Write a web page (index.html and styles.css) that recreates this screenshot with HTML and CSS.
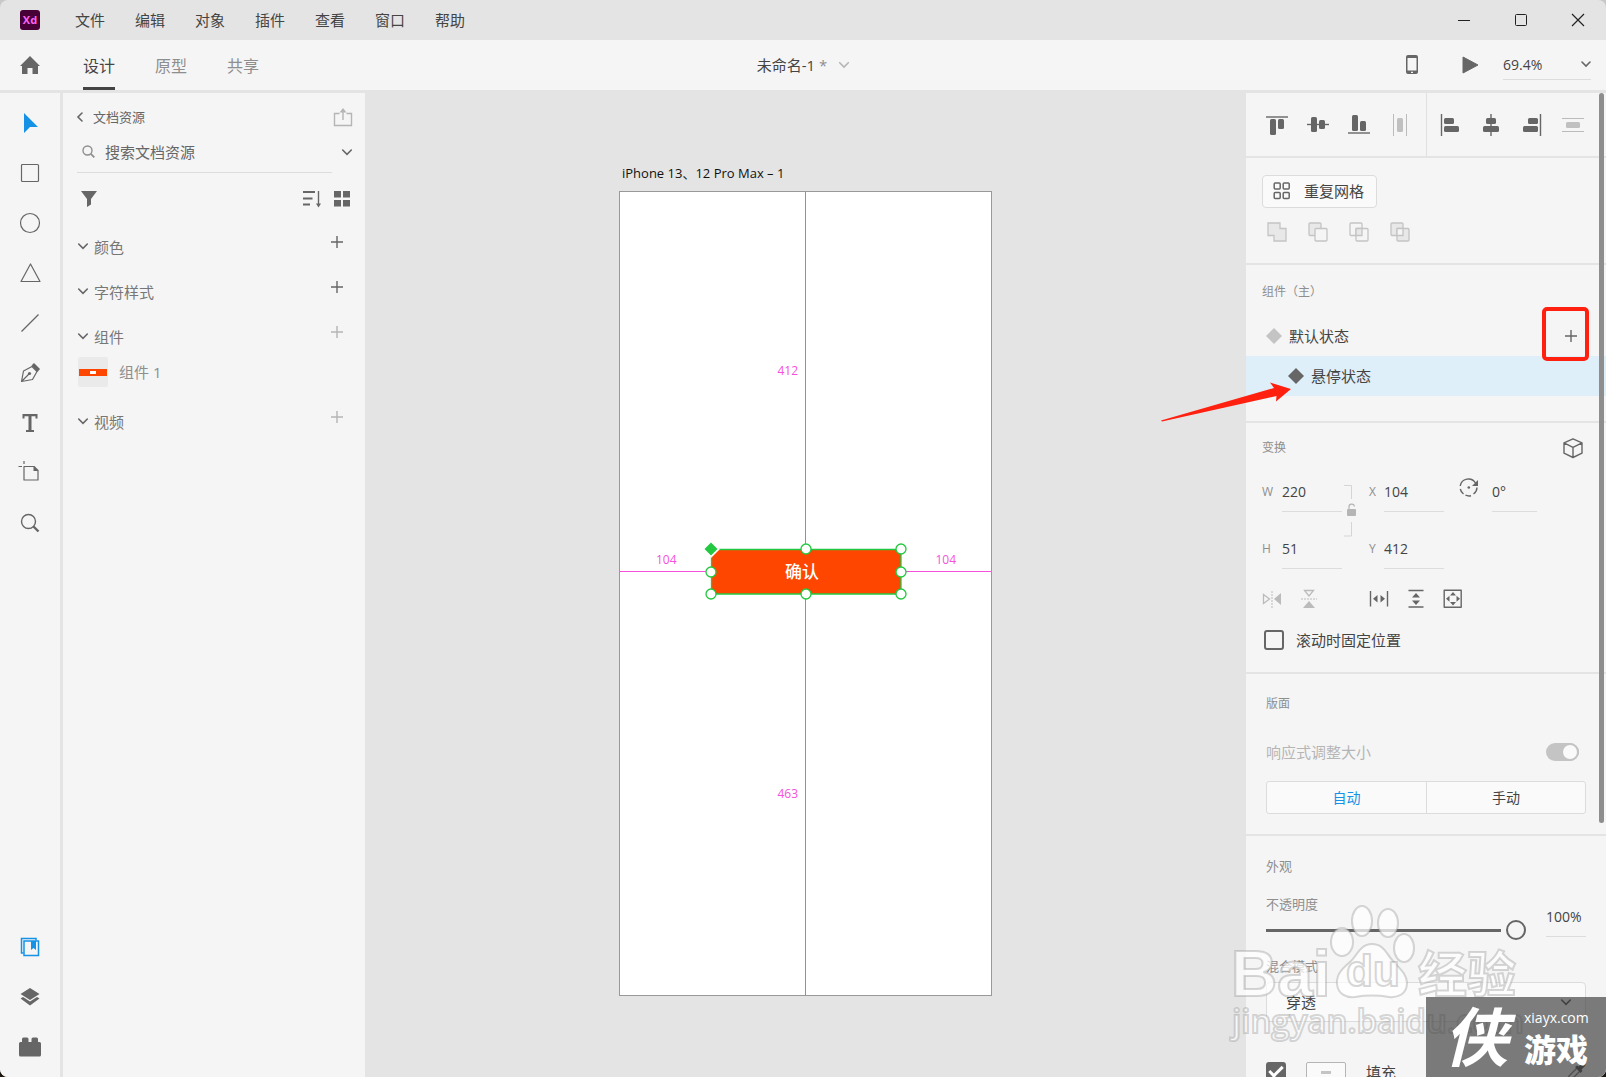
FILE: index.html
```html
<!DOCTYPE html>
<html lang="zh-CN">
<head>
<meta charset="utf-8">
<title>未命名-1</title>
<link rel="stylesheet" href="styles.css">
</head>
<body>
<div class="app">
  <header class="titlebar">
    <svg class="logo" width="20" height="20" viewBox="0 0 20 20"><rect width="20" height="20" rx="3" fill="#470137"/><text x="10" y="14" text-anchor="middle" class="logo-text">Xd</text></svg>
    <nav class="menu">
      <button>文件</button><button>编辑</button><button>对象</button><button>插件</button><button>查看</button><button>窗口</button><button>帮助</button>
    </nav>
    <div class="window-buttons">
      <button aria-label="最小化"><svg width="14" height="14" viewBox="0 0 14 14"><path d="M1 7.500h12" stroke="#222" fill="none"/></svg></button>
      <button aria-label="最大化"><svg width="14" height="14" viewBox="0 0 14 14"><rect x="1.500" y="1.500" width="11" height="11" rx="1" stroke="#222" fill="none"/></svg></button>
      <button aria-label="关闭"><svg width="14" height="14" viewBox="0 0 14 14"><path d="M1 1l12 12M13 1L1 13" stroke="#222" stroke-width="1.200" fill="none"/></svg></button>
    </div>
  </header>

  <div class="topbar">
    <div class="top-left">
      <button class="home" aria-label="主页"><svg width="20" height="20" viewBox="0 0 20 20"><path d="M10 1L20 11h-2v8h-5.500v-6h-5v6H2v-8H0z" fill="#666"/></svg></button>
      <nav class="tabs"><button class="tab active">设计</button><button class="tab">原型</button><button class="tab">共享</button></nav>
    </div>
    <button class="doc-name">未命名-1 <span class="dirty">*</span><svg width="10" height="6" viewBox="0 0 10 6"><path d="M.7.7L5 5 9.300.7" class="chev pale"/></svg></button>
    <div class="top-right">
      <button aria-label="移动设备预览"><svg width="12" height="20" viewBox="0 0 12 20"><path d="M2 0h8a2 2 0 0 1 2 2v15a2 2 0 0 1-2 2H2a2 2 0 0 1-2-2V2A2 2 0 0 1 2 0zM1.500 3v12.500h9V3zM5 16.800v1.200h2v-1.200z" fill="#666" fill-rule="evenodd"/></svg></button>
      <button aria-label="播放"><svg width="16" height="18" viewBox="0 0 16 18"><path d="M1 1l15 8L1 17z" fill="#666" stroke="#666" stroke-linejoin="round"/></svg></button>
      <button class="zoom-select"><span>69.4%</span><svg width="10" height="7" viewBox="0 0 10 7"><path d="M1 1l4 4 4-4" class="chev"/></svg></button>
    </div>
  </div>

  <div class="workspace">
    <aside class="tools">
      <button aria-label="选择"><svg width="22" height="22" viewBox="0 0 22 22"><path d="M5 1v20l6-6h8z" fill="#1592e6"/></svg></button>
      <button aria-label="矩形"><svg width="22" height="22" viewBox="0 0 22 22"><rect x="2.500" y="2.500" width="17" height="17" rx="1" class="ln"/></svg></button>
      <button aria-label="椭圆"><svg width="22" height="22" viewBox="0 0 22 22"><circle cx="11" cy="11" r="9.500" class="ln"/></svg></button>
      <button aria-label="多边形"><svg width="22" height="22" viewBox="0 0 22 22"><path d="M11.500 2L21 19.500H2z" class="ln"/></svg></button>
      <button aria-label="直线"><svg width="22" height="22" viewBox="0 0 22 22"><path d="M2.500 19.500l17-17" class="ln"/></svg></button>
      <button aria-label="钢笔"><svg width="22" height="22" viewBox="0 0 22 22"><path d="M2.500 19.500L4.500 9 13 4.500l5 5-4.500 8zM3 19l7-7" class="ln"/><circle cx="10.500" cy="11.500" r="1.600" fill="#666"/><path d="M12.500 3.500L15 1l6 6-2.500 3z" fill="#666"/></svg></button>
      <button aria-label="文本"><svg width="22" height="22" viewBox="0 0 22 22"><path d="M3.500 2h15v4.500h-2V4.300h-4V18H15v2H7v-2h2.500V4.300h-4v2.200h-2z" fill="#666"/></svg></button>
      <button aria-label="画板"><svg width="26" height="22" viewBox="0 0 26 22"><path d="M7 4.500h10l4 4v9.500h-14zM1.500 4.500H5M7 -1v3" class="ln"/><path d="M16.500 4l5 5h-5z" fill="#666"/></svg></button>
      <button aria-label="缩放"><svg width="22" height="22" viewBox="0 0 22 22"><circle cx="9.500" cy="9.500" r="7" class="ln thick"/><path d="M14.500 14.500l5 5" class="ln bold"/></svg></button>
      <div class="tools-end">
        <button aria-label="库"><svg width="22" height="22" viewBox="0 0 22 22"><path d="M17 4.500V2.500H2.500v14.500h2" stroke="#1592e6" fill="none" stroke-width="1.500"/><rect x="5" y="5" width="14.500" height="14.500" stroke="#1592e6" fill="none" stroke-width="1.500"/><path d="M12 5h5v9l-2.500-2-2.500 2z" fill="#1592e6"/></svg></button>
        <button aria-label="图层"><svg width="22" height="22" viewBox="0 0 22 22"><path d="M11 2l9.500 6-9.500 6-9.500-6zM1.500 12.500L4 11l7 4.500 7-4.500 2.500 1.500L11 19.500z" fill="#666"/></svg></button>
        <button aria-label="插件"><svg width="22" height="22" viewBox="0 0 22 22"><path d="M0 7.500A1.500 1.500 0 0 1 1.500 6H3V3a1.500 1.500 0 0 1 1.500-1.500H8A1.500 1.500 0 0 1 9.500 3v3h3V3A1.500 1.500 0 0 1 14 1.500h3.500A1.500 1.500 0 0 1 19 3v3h1.500A1.500 1.500 0 0 1 22 7.500V19a1.500 1.500 0 0 1-1.500 1.500h-19A1.500 1.500 0 0 1 0 19z" fill="#666"/></svg></button>
      </div>
    </aside>

    <aside class="assets">
      <div class="assets-head">
        <button class="back"><svg width="6" height="10" viewBox="0 0 6 10"><path d="M5 1L1 5l4 4" class="chev"/></svg>文档资源</button>
        <button aria-label="共享"><svg width="18" height="19" viewBox="0 0 18 19"><path d="M5.500 5.500h-5v12h17v-12h-5M9 12V2" stroke="#b5b5b5" stroke-width="1.400" fill="none"/><path d="M5.500 4.500L9 0l3.500 4.500z" fill="#b5b5b5"/></svg></button>
      </div>
      <div class="search">
        <label class="search-field"><svg width="13" height="13" viewBox="0 0 13 13"><circle cx="5.500" cy="5.500" r="4.500" stroke="#8e8e8e" stroke-width="1.400" fill="none"/><path d="M8.800 8.800l3.500 3.500" stroke="#8e8e8e" stroke-width="1.800"/></svg><input type="text" placeholder="搜索文档资源" aria-label="搜索文档资源"></label>
        <button aria-label="展开"><svg width="10" height="7" viewBox="0 0 10 7"><path d="M.7 1L5 5.300 9.300 1" class="chev"/></svg></button>
      </div>
      <div class="filters">
        <button aria-label="筛选"><svg width="16" height="16" viewBox="0 0 16 16"><path d="M0 0h16l-6 8v5.500L6 16V8z" fill="#666"/></svg></button>
        <div class="view-buttons">
          <button aria-label="排序"><svg width="18" height="18" viewBox="0 0 18 18"><path d="M0 2h12M0 8.500h9.500M0 14.500h7" stroke="#666" stroke-width="2"/><path d="M15.500 1v14" stroke="#666" stroke-width="1.400"/><path d="M13 13.500h5L15.500 17.500z" fill="#666"/></svg></button>
          <button aria-label="网格"><svg width="16" height="16" viewBox="0 0 16 16"><path d="M0 0h7v6.500H0zM9 0h7v6.500H9zM0 9h7v6.500H0zM9 9h7v6.500H9z" fill="#666"/></svg></button>
        </div>
      </div>
      <section class="group">
        <h2><svg width="10" height="7" viewBox="0 0 10 7"><path d="M.7 1L5 5.300 9.300 1" class="chev"/></svg>颜色</h2>
        <button class="add" aria-label="添加颜色"><svg width="12" height="12" viewBox="0 0 12 12"><path d="M6 0v12M0 6h12" class="plus"/></svg></button>
      </section>
      <section class="group">
        <h2><svg width="10" height="7" viewBox="0 0 10 7"><path d="M.7 1L5 5.300 9.300 1" class="chev"/></svg>字符样式</h2>
        <button class="add" aria-label="添加字符样式"><svg width="12" height="12" viewBox="0 0 12 12"><path d="M6 0v12M0 6h12" class="plus"/></svg></button>
      </section>
      <section class="group">
        <h2><svg width="10" height="7" viewBox="0 0 10 7"><path d="M.7 1L5 5.300 9.300 1" class="chev"/></svg>组件</h2>
        <button class="add" aria-label="添加组件"><svg width="12" height="12" viewBox="0 0 12 12"><path d="M6 0v12M0 6h12" class="plus pale"/></svg></button>
      </section>
      <div class="asset-item"><span class="thumb"><span class="thumb-button"></span></span>组件 1</div>
      <section class="group">
        <h2><svg width="10" height="7" viewBox="0 0 10 7"><path d="M.7 1L5 5.300 9.300 1" class="chev"/></svg>视频</h2>
        <button class="add" aria-label="添加视频"><svg width="12" height="12" viewBox="0 0 12 12"><path d="M6 0v12M0 6h12" class="plus pale"/></svg></button>
      </section>
    </aside>

    <main class="canvas">
      <div class="board-wrap">
        <div class="board-name">iPhone 13、12 Pro Max – 1</div>
        <div class="artboard">
          <span class="guide vertical"></span><span class="guide horizontal"></span>
          <span class="measure top">412</span><span class="measure left">104</span><span class="measure right">104</span><span class="measure bottom">463</span>
          <div class="selected">
            <span>确认</span>
            <svg class="handles" width="202" height="58" viewBox="-6 -6 202 58"><path d="M8 .5H190V45H.5V8" fill="none" stroke="#22c83f" stroke-width="1.300"/><path d="M0 0h9L0 9z" fill="#fff"/><path d="M0-6.500L6.500 0 0 6.500-6.500 0z" fill="#22c83f"/><g fill="#fff" stroke="#22c83f" stroke-width="1.300"><circle cx="95" cy="0" r="5"/><circle cx="190" cy="0" r="5"/><circle cx="0" cy="23" r="5"/><circle cx="190" cy="23" r="5"/><circle cx="0" cy="45" r="5"/><circle cx="95" cy="45" r="5"/><circle cx="190" cy="45" r="5"/></g></svg>
          </div>
        </div>
      </div>
    </main>

    <aside class="inspector">
      <span class="scroll-thumb"></span>
      <section class="align">
        <div class="align-group">
          <button aria-label="顶对齐"><svg width="22" height="22" viewBox="0 0 22 22"><path d="M0 3h22" class="ln thick"/><rect x="4" y="5" width="6" height="16" rx="1.500" fill="#666"/><rect x="12" y="5" width="6" height="10" rx="1.500" fill="#666"/></svg></button>
          <button aria-label="垂直居中"><svg width="22" height="22" viewBox="0 0 22 22"><path d="M0 10.500h22" class="ln thick"/><rect x="4" y="3" width="6" height="15" rx="1.500" fill="#666"/><rect x="12" y="6" width="6" height="9" rx="1.500" fill="#666"/></svg></button>
          <button aria-label="底对齐"><svg width="22" height="22" viewBox="0 0 22 22"><path d="M0 19h22" class="ln thick"/><rect x="4" y="1" width="6" height="16" rx="1.500" fill="#666"/><rect x="12" y="7" width="6" height="10" rx="1.500" fill="#666"/></svg></button>
          <button aria-label="水平分布"><svg width="22" height="22" viewBox="0 0 22 22"><path d="M4.500 0v22M17.500 0v22" stroke="#bbb"/><rect x="8" y="4" width="6" height="14" rx="1.500" fill="#c0c0c0"/></svg></button>
        </div>
        <div class="align-group second">
          <button aria-label="左对齐"><svg width="22" height="22" viewBox="0 0 22 22"><path d="M2.500 0v22" class="ln thick"/><rect x="5" y="4" width="10" height="6" rx="1.500" fill="#666"/><rect x="5" y="12" width="15" height="6" rx="1.500" fill="#666"/></svg></button>
          <button aria-label="水平居中"><svg width="22" height="22" viewBox="0 0 22 22"><path d="M11 0v22" class="ln thick"/><rect x="6" y="4" width="10" height="6" rx="1.500" fill="#666"/><rect x="3" y="12" width="16" height="6" rx="1.500" fill="#666"/></svg></button>
          <button aria-label="右对齐"><svg width="22" height="22" viewBox="0 0 22 22"><path d="M19.500 0v22" class="ln thick"/><rect x="7" y="4" width="10" height="6" rx="1.500" fill="#666"/><rect x="2" y="12" width="15" height="6" rx="1.500" fill="#666"/></svg></button>
          <button aria-label="垂直分布"><svg width="22" height="22" viewBox="0 0 22 22"><path d="M0 4.500h22M0 17.500h22" stroke="#bbb"/><rect x="4" y="8" width="14" height="6" rx="1.500" fill="#c0c0c0"/></svg></button>
        </div>
      </section>

      <section class="repeat">
        <button class="repeat-grid"><svg width="18" height="18" viewBox="0 0 18 18"><g fill="none" stroke="#666" stroke-width="1.500"><rect x="1.200" y="1" width="6" height="6" rx="1"/><rect x="10.200" y="1" width="6" height="6" rx="1"/><rect x="1.200" y="10.500" width="6" height="6" rx="1"/><rect x="10.200" y="10.500" width="6" height="6" rx="1"/></g></svg>重复网格</button>
        <div class="boolean">
          <button aria-label="添加"><svg width="20" height="20" viewBox="0 0 20 20"><path d="M1 1h12v5.500h6V19H7v-5.500H1z" class="bool on"/></svg></button>
          <button aria-label="减去"><svg width="20" height="20" viewBox="0 0 20 20"><rect x="1" y="1" width="12" height="12.500" rx="1" class="bool on"/><rect x="7" y="6.500" width="12" height="12.500" rx="1" class="bool"/></svg></button>
          <button aria-label="交叉"><svg width="20" height="20" viewBox="0 0 20 20"><rect x="1" y="1" width="12" height="12.500" rx="1" class="bool"/><rect x="7" y="6.500" width="12" height="12.500" rx="1" class="bool"/><path d="M7 6.500h6v7H7z" class="bool on"/></svg></button>
          <button aria-label="排除重叠"><svg width="20" height="20" viewBox="0 0 20 20"><rect x="1" y="1" width="12" height="12.500" rx="1" class="bool on"/><rect x="7" y="6.500" width="12" height="12.500" rx="1" class="bool on"/><path d="M7 6.500h6v7H7z" class="bool"/></svg></button>
        </div>
      </section>

      <section class="component">
        <h3>组件（主）</h3>
        <div class="state"><svg width="16" height="16" viewBox="0 0 16 16"><path d="M8 0l8 8-8 8-8-8z" fill="#c4c4c4"/></svg>默认状态
          <button class="add-state" aria-label="添加状态"><svg width="12" height="12" viewBox="0 0 12 12"><path d="M6 0v12M0 6h12" class="plus"/></svg></button>
          <span class="mark-box"></span>
        </div>
        <div class="state hover"><svg width="16" height="16" viewBox="0 0 16 16"><path d="M8 0l8 8-8 8-8-8z" fill="#666"/></svg>悬停状态
          <svg class="mark-arrow" width="132" height="42" viewBox="0 0 132 42"><path d="M1 40.500L114 8l-4-5.500 21 6.500-15 12.500.500-5.500L2 41.500z" fill="#ff2010"/></svg>
        </div>
      </section>

      <section class="transform">
        <div class="section-head"><h3>变换</h3><button aria-label="3D 变换"><svg width="20" height="20" viewBox="0 0 20 20"><path d="M10 .8l9 4v10.400l-9 4.300-9-4.300V4.800zM1 4.800l9 4.500 9-4.500M10 9.300v10" class="ln thick"/></svg></button></div>
        <div class="fields">
          <label class="field"><span>W</span><input type="text" value="220"></label>
          <svg class="lock" width="18" height="54" viewBox="0 0 18 54"><path d="M2 1.500h7.500V15M9.500 38v14H2" stroke="#d5d5d5" fill="none"/><rect x="5" y="25" width="9" height="7" rx="1" fill="#b5b5b5"/><path d="M7 25v-2a2.700 2.700 0 0 1 5.400-.5" stroke="#b5b5b5" stroke-width="1.200" fill="none"/></svg>
          <label class="field"><span>X</span><input type="text" value="104"></label>
          <label class="field rotate"><svg width="20" height="20" viewBox="0 0 20 20"><path d="M1.200 8A8.300 8.300 0 0 1 16.500 5M18 9.500a8.300 8.300 0 0 1-3.500 6.500M12 17.700a8.300 8.300 0 0 1-5.500-.5M4.500 16a8.300 8.300 0 0 1-3.200-5" class="ln thick"/><path d="M19 2v6h-6z" fill="#666"/><circle cx="9.800" cy="9.500" r="1.300" fill="#666"/></svg><input type="text" value="0°" aria-label="旋转"></label>
          <label class="field"><span>H</span><input type="text" value="51"></label>
          <label class="field y"><span>Y</span><input type="text" value="412"></label>
        </div>
        <div class="flip-row">
          <button aria-label="水平翻转"><svg width="20" height="20" viewBox="0 0 20 20"><path d="M1.500 5.500v9l6-4.500z" stroke="#bbb" fill="none" stroke-width="1.300"/><path d="M10 2v17" stroke="#bbb" stroke-dasharray="2 1"/><path d="M19 4v12l-7-6z" fill="#bbb"/></svg></button>
          <button aria-label="垂直翻转"><svg width="20" height="20" viewBox="0 0 20 20"><path d="M5.500 1.500h9L10 7z" stroke="#bbb" fill="none" stroke-width="1.300"/><path d="M2 10h16" stroke="#bbb" stroke-dasharray="2 1"/><path d="M4 19h12l-6-7z" fill="#bbb"/></svg></button>
          <button class="resize" aria-label="水平调整"><svg width="20" height="20" viewBox="0 0 20 20"><path d="M1.500 2v15.500M18.500 2v15.500" class="ln thick"/><path d="M8.500 6v7.500L4 9.700zM11.500 6v7.500L16 9.700z" fill="#666"/></svg></button>
          <button aria-label="垂直调整"><svg width="20" height="20" viewBox="0 0 20 20"><path d="M2.500 1.500h15M2.500 18h15" class="ln thick"/><path d="M6 8.500h8L10 4zM6 11.500h8L10 16z" fill="#666"/></svg></button>
          <button aria-label="适应内容"><svg width="20" height="20" viewBox="0 0 20 20"><rect x="1.200" y="1.200" width="17" height="17" class="ln thick"/><path d="M7 6.500h6L10 3zM7 13h6l-3 3.500zM6.500 6.700v6L3 9.700zM13.500 6.700v6l3.500-3z" fill="#666"/></svg></button>
        </div>
        <label class="check-row"><input type="checkbox" class="check">滚动时固定位置</label>
      </section>

      <section class="layout">
        <h3>版面</h3>
        <label class="toggle-row">响应式调整大小<input type="checkbox" class="toggle" checked disabled></label>
        <div class="segmented"><button class="on">自动</button><button>手动</button></div>
      </section>

      <section class="appearance">
        <h3>外观</h3>
        <div class="opacity">
          <div class="opacity-main"><label for="opacity">不透明度</label><input id="opacity" type="range" min="0" max="100" value="100"></div>
          <input class="opacity-value" type="text" value="100%" aria-label="不透明度数值">
        </div>
        <label class="blend-label" for="blend">混合模式</label>
        <div class="select-wrap"><select id="blend"><option>穿透</option></select><svg width="10" height="7" viewBox="0 0 10 7"><path d="M.7 1L5 5.300 9.300 1" class="chev dark"/></svg></div>
        <div class="fill-row"><input id="fill" type="checkbox" class="check" checked><button class="swatch" aria-label="填充颜色"><span></span></button><label for="fill">填充</label>
          <button class="dropper" aria-label="吸管"><svg width="20" height="20" viewBox="0 0 20 20"><path d="M2 18l1-4 8-8 3 3-8 8z" class="ln thick"/><path d="M9 5l2-1.500 1.500 1L16 1a2 2 0 0 1 3 3l-3.500 3.500 1 1.500-2 2z" fill="#333"/></svg></button></div>
      </section>
    </aside>
  </div>

  <div class="baidu">
    <svg width="300" height="150" viewBox="0 0 300 150">
      <g class="mark">
        <text x="1" y="98" class="mark-latin">Bai</text>
        <ellipse cx="112" cy="44" rx="11" ry="14"/><ellipse cx="132" cy="23" rx="10" ry="15"/><ellipse cx="158" cy="25" rx="10" ry="14"/><ellipse cx="174" cy="50" rx="10" ry="14"/>
        <path d="M142 46c-12 0-15 12-22 18s-14 12-13 22c1 10 9 14 18 13 12-2 22-2 34 0 9 1 18-3 18-14 0-9-8-15-14-22-6-6-9-17-21-17z"/>
        <text x="116" y="88" class="mark-du">du</text>
        <text x="188" y="94" class="mark-cjk">经验</text>
        <text x="2" y="135" class="mark-url">jingyan.baidu.com</text>
      </g>
    </svg>
  </div>
  <div class="site-badge"><span class="badge-char">侠</span><span class="badge-text"><span class="badge-url">xiayx.com</span><span class="badge-name">游戏</span></span></div>
</div>
</body>
</html>
```
FILE: styles.css
```css
*, *::before, *::after { box-sizing: border-box; }
html { height: 100%; background: linear-gradient(#c8c8c8 50%, #1c1610 50%); }
body {
  margin: 0;
  height: 100%;
  color: #444;
  font: 15px/20px "Open Sans", "Noto Sans CJK SC", sans-serif;
}
button, input, select { font: inherit; color: inherit; border: 0; background: none; padding: 0; margin: 0; border-radius: 0; outline: 0; }
button { display: flex; align-items: center; justify-content: center; }
svg { display: block; flex: none; overflow: visible; }
h2, h3 { margin: 0; font-weight: 400; }

.chev { fill: none; stroke: #666; stroke-width: 1.6; stroke-linecap: round; }
.chev.pale { stroke: #b5b5b5; }
.chev.dark { stroke: #333; }
.plus { fill: none; stroke: #666; stroke-width: 1.4; }
.plus.pale { stroke: #b5b5b5; }
.ln { fill: none; stroke: #666; stroke-width: 1.2; stroke-linejoin: round; }
.ln.thick { stroke-width: 1.4; }
.ln.bold { stroke-width: 2.4; }
.bool { fill: #f5f5f5; stroke: #c4c4c4; stroke-width: 1.3; }
.bool.on { fill: #e8e8e8; }

.app {
  position: relative;
  display: flex;
  flex-direction: column;
  height: 100%;
  overflow: hidden;
  border-radius: 8px;
  background: #e4e4e4;
}

/* Title bar */
.titlebar { display: flex; align-items: center; height: 40px; flex: none; padding-left: 20px; }
.logo-text { font: 700 11px "Open Sans", sans-serif; fill: #ff61f6; }
.menu { display: flex; gap: 30px; margin-left: 35px; }
.window-buttons { display: flex; margin-left: auto; }
.window-buttons button { width: 57px; height: 38px; }

/* Top bar */
.topbar {
  display: grid;
  grid-template-columns: 1fr auto 1fr;
  height: 50px;
  flex: none;
  background: #f5f5f5;
}
.top-left { display: flex; }
.home { width: 60px; }
.tabs { display: flex; gap: 40px; margin-left: 23px; }
.tab { font-size: 16px; color: #8e8e8e; border-top: 5px solid transparent; border-bottom: 3px solid transparent; }
.tab.active { color: #444; border-bottom-color: #444; }
.doc-name { gap: 4px; }
.doc-name svg { margin-left: 8px; }
.dirty { color: #8e8e8e; }
.top-right { display: flex; justify-content: flex-end; align-items: center; padding-right: 15px; }
.top-right button:first-child { margin-right: 44px; }
.zoom-select { width: 88px; height: 30px; margin-left: 25px; justify-content: space-between; border-bottom: 1px solid #dcdcdc; font-size: 14px; }

.workspace { display: flex; flex: 1; min-height: 0; margin-top: 3px; }

/* Tools */
.tools { display: flex; flex-direction: column; width: 60px; margin-right: 3px; padding: 5px 0; background: #f5f5f5; }
.tools button { width: 60px; height: 50px; flex: none; }
.tools-end { margin-top: auto; }

/* Document assets */
.assets { width: 302px; flex: none; padding: 10px 13px 0 14px; background: #f5f5f5; }
.assets-head { display: flex; justify-content: space-between; height: 28px; font-size: 13px; color: #666; }
.back { gap: 10px; }
.search { display: flex; justify-content: space-between; height: 42px; color: #666; }
.search-field { display: flex; align-items: center; gap: 10px; width: 255px; padding-left: 5px; border-bottom: 1px solid #dcdcdc; }
.search-field input { width: 200px; }
.search-field input::placeholder { color: #666; opacity: 1; }
.filters { display: flex; justify-content: space-between; align-items: center; height: 51px; padding: 0 2px 0 4px; }
.view-buttons { display: flex; gap: 13px; }
.group { display: flex; justify-content: space-between; align-items: center; height: 45px; }
.group h2 { display: flex; align-items: center; gap: 6px; padding-left: 1px; font-size: 15px; color: #777; }
.add { padding-bottom: 10px; margin-right: 9px; }
.asset-item { display: flex; align-items: center; gap: 11px; height: 26px; padding-left: 1px; margin-bottom: 14px; color: #8e8e8e; }
.thumb { display: flex; align-items: center; justify-content: center; width: 30px; height: 30px; border-radius: 2px; background: #eaeaea; }
.thumb-button { width: 28px; height: 7px; border: solid #ff4600; border-width: 2px 11px; background: #fff; }

/* Canvas */
.canvas { display: flex; justify-content: center; flex: 1; min-width: 0; padding-top: 70px; }
.board-wrap { width: 373px; }
.board-name { height: 28px; padding-left: 3px; font-size: 13px; color: #111; }
.artboard { position: relative; height: 805px; border: 1px solid #999; background: #fff; }
.guide { position: absolute; background: #f650dc; }
.guide.vertical { left: 185px; top: 0; bottom: 0; width: 1px; }
.guide.horizontal { top: 379px; left: 0; right: 0; height: 1px; }
.measure { position: absolute; font-size: 12px; color: #f650dc; }
.measure.top { top: 169px; right: 193px; }
.measure.bottom { top: 592px; right: 193px; }
.measure.left { top: 358px; left: 36px; }
.measure.right { top: 358px; right: 35px; }
.selected {
  position: absolute;
  left: 91px;
  top: 357px;
  display: flex;
  align-items: center;
  justify-content: center;
  width: 190px;
  height: 45px;
  padding-right: 8px;
  background: #ff4600;
  color: #fff;
  font-size: 17px;
  font-weight: 500;
}
.handles { position: absolute; left: -6px; top: -6px; }

/* Inspector */
.inspector { position: relative; width: 360px; flex: none; background: #f5f5f5; }
.inspector > section { padding: 0 20px; border-bottom: 2px solid #e4e4e4; }
.inspector h3 { font-size: 12px; color: #8e8e8e; }
.scroll-thumb { position: absolute; z-index: 2; top: 0; right: 2px; width: 5px; height: 730px; border-radius: 3px; background: #8e8e8e; }

.inspector > .align { display: flex; height: 65px; padding: 0; }
.align-group { display: flex; width: 180px; padding-left: 10px; }
.align-group.second { border-left: 1px solid #e0e0e0; padding-left: 2px; }
.align-group button, .boolean button { width: 41px; }

.inspector > .repeat { padding: 17px 0 19px; }
.repeat-grid { height: 33px; margin: 0 0 12px 16px; padding: 0 12px 2px 10px; gap: 13px; border: 1px solid #dcdcdc; border-radius: 4px; background: #fafafa; }
.boolean { display: flex; height: 24px; padding-left: 10px; }

.inspector > .component { padding: 17px 0 25px; }
.component h3 { margin: 0 0 14px 16px; }
.state { position: relative; display: flex; align-items: center; gap: 7px; height: 40px; padding: 0 29px 0 20px; }
.state.hover { padding-left: 42px; background: #dfeffa; }
.add-state { margin-left: auto; }
.mark-box { position: absolute; z-index: 3; right: 17px; top: -9px; width: 47px; height: 54px; border: 4px solid #ff2010; border-radius: 5px; }
.mark-arrow { position: absolute; right: 314px; top: 24px; }

.inspector > .transform { padding: 15px 0 22px 16px; }
.section-head { display: flex; justify-content: space-between; margin: 0 23px 14px 0; }
.fields { display: grid; grid-template-columns: 80px 27px 75px 93px; grid-template-rows: 40px 40px; row-gap: 17px; justify-content: start; }
.field { display: flex; align-items: center; font-size: 14px; }
.field span { width: 20px; font-size: 12px; color: #8e8e8e; }
.field input { width: 60px; height: 40px; border-bottom: 1px solid #dcdcdc; }
.field:nth-of-type(2) span, .field.y span { width: 15px; }
.field.rotate { justify-content: flex-end; gap: 13px; }
.field.rotate svg { margin-bottom: 8px; }
.field.rotate input { width: 45px; }
.field.y { grid-column: 3; }
.lock { grid-row: 1 / 3; grid-column: 2; margin-top: 12px; }
.flip-row { display: flex; align-items: center; gap: 17px; height: 24px; margin: 18px 0 19px; }
.flip-row .resize { margin-left: 33px; }
.check-row { display: flex; align-items: center; gap: 12px; height: 20px; padding-left: 2px; }
.check { appearance: none; width: 20px; height: 20px; flex: none; border: 2px solid #666; border-radius: 3px; }
.check:checked { background: #666; display: grid; place-items: center; }
.check:checked::after { content: ""; width: 14px; height: 8px; border: solid #fff; border-width: 0 0 3px 3px; rotate: -45deg; margin-bottom: 4px; }

.inspector > .layout { padding: 20px 20px 20px; }
.toggle-row { display: flex; justify-content: space-between; align-items: center; height: 20px; margin: 28px 7px 19px 0; color: #b5b5b5; }
.toggle { appearance: none; display: flex; justify-content: flex-end; width: 33px; height: 18px; border-radius: 9px; background: #c4c4c4; }
.toggle::after { content: ""; width: 18px; height: 18px; border: 2px solid #c4c4c4; border-radius: 50%; background: #fafafa; }
.segmented { display: grid; grid-template-columns: 1fr 1fr; height: 33px; border: 1px solid #dcdcdc; border-radius: 3px; background: #fafafa; font-size: 14px; }
.segmented button + button { border-left: 1px solid #dcdcdc; }
.segmented .on { color: #1592e6; }

.inspector > .appearance { padding: 20px 20px 0; border: 0; }
.appearance h3 { font-size: 13px; margin-bottom: 18px; }
.opacity { display: flex; justify-content: space-between; }
.opacity-main { display: flex; flex-direction: column; gap: 6px; width: 260px; font-size: 13px; color: #8e8e8e; }
#opacity { appearance: none; width: 100%; height: 20px; }
#opacity::-webkit-slider-runnable-track { height: 20px; background: linear-gradient(#666, #666) 0 50% / calc(100% - 25px) 3px no-repeat; }
#opacity::-webkit-slider-thumb { appearance: none; box-sizing: border-box; width: 20px; height: 20px; border: 2px solid #666; border-radius: 50%; background: #f5f5f5; }
.opacity-value { width: 40px; height: 40px; margin-top: 3px; border-bottom: 1px solid #dcdcdc; font-size: 14px; }
.blend-label { display: block; margin: 16px 0 6px; font-size: 13px; color: #8e8e8e; }
.select-wrap { display: grid; align-items: center; }
.select-wrap > * { grid-area: 1 / 1; }
.select-wrap select { appearance: none; width: 100%; height: 40px; padding-left: 19px; border: 1px solid #dcdcdc; border-radius: 4px; background: #fafafa; }
.select-wrap svg { justify-self: end; margin-right: 15px; }
.fill-row { display: flex; align-items: center; gap: 20px; height: 20px; margin-top: 40px; }
.swatch { width: 40px; height: 20px; border: 1px solid #b5b5b5; border-radius: 2px; background: #fafafa; }
.swatch span { width: 10px; height: 3px; background: #c4c4c4; }
.dropper { margin-left: auto; }

/* Watermarks */
.baidu { position: absolute; right: 76px; bottom: 29px; pointer-events: none; }
.mark { fill: rgba(255, 255, 255, 0.72); stroke: rgba(140, 140, 140, 0.35); stroke-width: 2; }
.mark-latin { font: 700 64px "Liberation Sans", sans-serif; }
.mark-du { font: 700 44px "Liberation Sans", sans-serif; }
.mark-cjk { font: 700 49px "Noto Sans CJK SC", sans-serif; }
.mark-url { font: 600 33px "Open Sans", sans-serif; }
.site-badge { position: absolute; z-index: 3; right: 0; bottom: 0; display: flex; align-items: center; gap: 14px; width: 180px; height: 80px; padding-left: 16px; background: rgba(70, 70, 70, 0.7); color: #fff; }
.badge-char { width: 68px; text-align: center; font-size: 64px; line-height: 80px; font-weight: 700; font-style: italic; }
.badge-text { display: flex; flex-direction: column; gap: 6px; }
.badge-url { font-size: 14px; line-height: 20px; }
.badge-name { font-size: 32px; line-height: 32px; font-weight: 900; }
```
